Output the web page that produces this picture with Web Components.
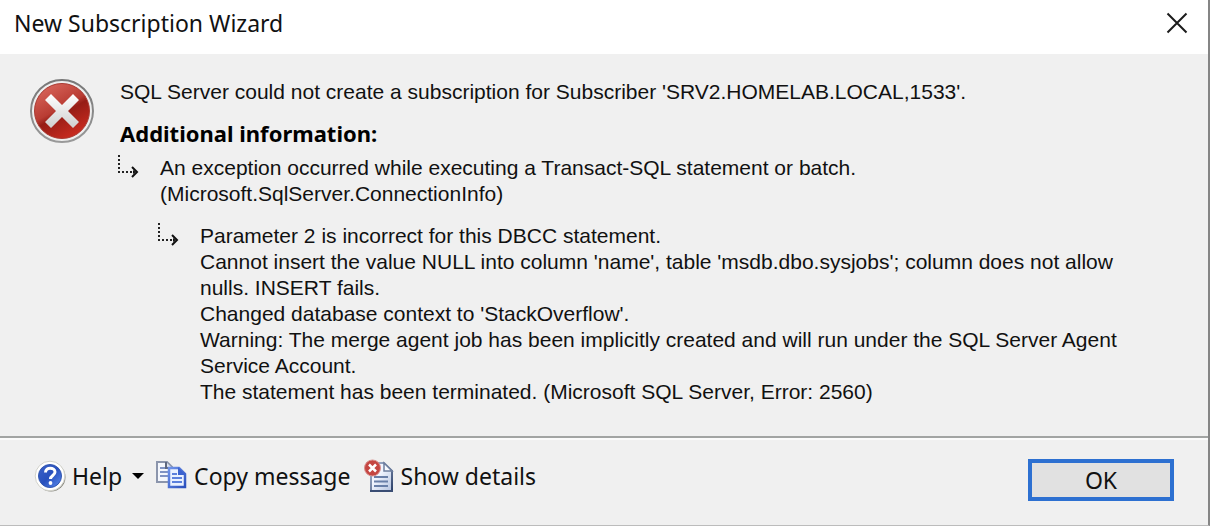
<!DOCTYPE html>
<html lang="en">
<head>
<meta charset="utf-8">
<title>New Subscription Wizard</title>
<style>
  html, body { margin: 0; background: #f0f0f0; }
</style>
</head>
<body>
<wizard-dialog>
  <span slot="title">New Subscription Wizard</span>
  <error-message>
    SQL Server could not create a subscription for Subscriber 'SRV2.HOMELAB.LOCAL,1533'.
    <span slot="heading">Additional information:</span>
    <nested-detail slot="details">
      An exception occurred while executing a Transact-SQL statement or batch.<br>(Microsoft.SqlServer.ConnectionInfo)
      <nested-detail slot="inner">
        Parameter 2 is incorrect for this DBCC statement.<br>Cannot insert the value NULL into column 'name', table 'msdb.dbo.sysjobs'; column does not allow<br>nulls. INSERT fails.<br>Changed database context to 'StackOverflow'.<br>Warning: The merge agent job has been implicitly created and will run under the SQL Server Agent<br>Service Account.<br>The statement has been terminated. (Microsoft SQL Server, Error: 2560)
      </nested-detail>
    </nested-detail>
  </error-message>
  <tool-button slot="tools" icon="help" menu>Help</tool-button>
  <tool-button slot="tools" icon="copy">Copy message</tool-button>
  <tool-button slot="tools" icon="details">Show details</tool-button>
  <default-button slot="actions">OK</default-button>
</wizard-dialog>

<script>
const define = (name, html, setup) => {
  const template = document.createElement('template');
  template.innerHTML = html;
  customElements.define(name, class extends HTMLElement {
    constructor() {
      super();
      this.attachShadow({ mode: 'open' }).append(template.content.cloneNode(true));
    }
    connectedCallback() { if (setup) setup(this, this.shadowRoot); }
  });
};

define('wizard-dialog', `
  <style>
    :host { display: flex; flex-direction: column; box-sizing: border-box; min-height: 100vh;
      border-right: 2px solid #858585; border-bottom: 1px solid #bcbcbc;
      background: #f0f0f0; color: #111; font-family: "Noto Sans", sans-serif; }
    header { display: flex; align-items: center; justify-content: space-between;
      height: 54px; box-sizing: border-box; padding: 0 20px 8px 14px; background: #fff; }
    h1 { margin: 0; font-size: 23px; line-height: 32px; font-weight: 400; }
    header button { display: grid; padding: 0; border: 0; background: none; }
    main { flex: 1; padding: 25px 30px 24px; }
    footer { display: flex; align-items: flex-start; justify-content: space-between;
      height: 89px; box-sizing: border-box; padding: 21px 34px 0;
      border-top: 2px solid #a2a4a3; box-shadow: inset 0 2px #fbfbfb; }
    nav { display: flex; gap: 12px; }
  </style>
  <header>
    <h1><slot name="title"></slot></h1>
    <button type="button" aria-label="Close">
      <svg width="22" height="22" viewBox="0 0 22 22"><path d="M1.5 1.5l19 19M20.5 1.5l-19 19" stroke="#1b1b1b" stroke-width="2" fill="none"/></svg>
    </button>
  </header>
  <main><slot></slot></main>
  <footer>
    <nav aria-label="Message tools"><slot name="tools"></slot></nav>
    <slot name="actions"></slot>
  </footer>`);

define('error-message', `
  <style>
    :host { display: grid; grid-template-columns: 64px 1fr; column-gap: 26px;
      font: 21px/26px "Liberation Sans", Arial, sans-serif; }
    p { margin: 0; }
    h2 { margin: 15px 0 9px; font: 700 22px/26px "Noto Sans", sans-serif; color: #000; }
  </style>
  <svg width="64" height="64" viewBox="0 0 64 64" role="img" aria-label="Error">
    <defs>
      <linearGradient id="red" x1=".2" y1="0" x2=".75" y2="1">
        <stop offset="0" stop-color="#d9665c"/><stop offset=".45" stop-color="#b93c33"/>
        <stop offset=".55" stop-color="#961d16"/><stop offset="1" stop-color="#cf2c20"/>
      </linearGradient>
      <linearGradient id="ring" x1="0" y1="0" x2="0" y2="1">
        <stop offset="0" stop-color="#777"/><stop offset="1" stop-color="#999"/>
      </linearGradient>
      <linearGradient id="cross" x1="0" y1="0" x2="0" y2="1">
        <stop offset="0" stop-color="#fff"/><stop offset="1" stop-color="#cfcfcf"/>
      </linearGradient>
    </defs>
    <circle cx="32" cy="32" r="31" fill="#eee" stroke="url(#ring)" stroke-width="2"/>
    <circle cx="32" cy="32" r="27.5" fill="url(#red)" stroke="#a93a32" stroke-width="1"/>
    <path d="M21 15l11 11 11-11 6 6-11 11 11 11-6 6-11-11-11 11-6-6 11-11-11-11z" fill="url(#cross)"/>
  </svg>
  <div>
    <p><slot></slot></p>
    <h2><slot name="heading"></slot></h2>
    <slot name="details"></slot>
  </div>`);

define('nested-detail', `
  <style>
    :host { display: grid; grid-template-columns: 20px 1fr; column-gap: 20px; }
    ::slotted(nested-detail) { margin-top: 16px; }
    p { margin: 0; }
  </style>
  <svg width="20" height="24" viewBox="2 0 20 24" overflow="visible" aria-hidden="true">
    <path d="M1 0v18" stroke="#222" stroke-width="2" stroke-dasharray="2 2"/>
    <path d="M0 17h16" stroke="#222" stroke-width="2" stroke-dasharray="2 2"/>
    <path d="M14 12l5 5-5 5" fill="none" stroke="#111" stroke-width="2"/><path d="M15 15l3 2-3 2z" fill="#111"/>
  </svg>
  <div><p><slot></slot></p><slot name="inner"></slot></div>`);

const icons = {
  help: `<svg width="32" height="34" viewBox="0 0 32 34">
    <defs><linearGradient id="b" x1="0" y1="0" x2="1" y2="1"><stop offset="0" stop-color="#3c62c8"/><stop offset=".5" stop-color="#2850bd"/><stop offset="1" stop-color="#5b8cf0"/></linearGradient></defs>
    <circle cx="17" cy="18" r="14.5" fill="#85857c"/><circle cx="16" cy="17" r="14.8" fill="#fff" stroke="#d2d2ca"/>
    <circle cx="16" cy="17" r="11.5" fill="url(#b)" stroke="#3458b0"/>
    <path d="M11.5 13.5c0-6 9.500-5.500 9.500-.5 0 3.500-4.500 3.500-4.500 7" fill="none" stroke="#fff" stroke-width="3"/><circle cx="16.500" cy="24" r="1.900" fill="#fff"/></svg>`,
  copy: `<svg width="32" height="34" viewBox="1 1 32 34">
    <defs><linearGradient id="c" x1="0" y1="0" x2="1" y2="1"><stop offset="0" stop-color="#6f93ea"/><stop offset="1" stop-color="#2b50bd"/></linearGradient></defs>
    <path d="M2 4h10l5 5v15H2z" fill="#f4f7fd" stroke="#8b95ac" stroke-width="2"/><path d="M11 4v6h6" fill="#dce2ef" stroke="#5e6880" stroke-width="2"/>
    <path d="M5 10h5M5 14h8M5 18h8" stroke="#7f93c4" stroke-width="2"/>
    <path d="M14 10h10l6 6v13H14z" fill="#eaf1ff" stroke="url(#c)" stroke-width="2.500"/><path d="M23 9v8h8z" fill="#3b62cf"/>
    <path d="M17 16h5M17 20h10M17 24h10" stroke="#5b80dc" stroke-width="2"/></svg>`,
  details: `<svg width="32" height="34" viewBox="-3 0 32 34">
    <defs><linearGradient id="d" x1="0" y1="0" x2="1" y2="1"><stop offset="0" stop-color="#b0bed8"/><stop offset="1" stop-color="#2d4169"/></linearGradient>
    <linearGradient id="e" x1="0" y1="0" x2="1" y2="1"><stop offset=".4" stop-color="#f1f5ff"/><stop offset="1" stop-color="#b4c2de"/></linearGradient></defs>
    <path d="M5 4h13l8 8v20H5z" fill="url(#e)" stroke="url(#d)" stroke-width="2"/><path d="M4 32h23" stroke="#3a4d74" stroke-width="2"/>
    <path d="M18 4v8h8z" fill="#f8faff" stroke="#6e7f9f" stroke-width="1.500"/><path d="M8 18h14M8 22.500h14M8 27h14" stroke="#697fa8" stroke-width="2"/>
    <circle cx="6.500" cy="9" r="8" fill="#c54642" stroke="#d9908d"/><path d="M3 5.500l7 7M10 5.500l-7 7" stroke="#fff" stroke-width="2.500"/></svg>`
};

define('tool-button', `
  <style>
    :host { display: block; }
    button { display: flex; align-items: center; gap: 6px; padding: 0; border: 0; background: none;
      color: #111; font: 23px/34px "Noto Sans", sans-serif; white-space: nowrap; }
    #icon { display: grid; }
    #arrow { display: none; margin-left: 4px; }
    :host([menu]) #arrow { display: block; }
  </style>
  <button type="button"><span id="icon"></span><slot></slot>
    <svg id="arrow" width="12" height="6" viewBox="0 0 12 6" aria-hidden="true"><path d="M0 0h12L6 6z"/></svg>
  </button>`, (host, root) => {
    root.getElementById('icon').innerHTML = icons[host.getAttribute('icon')];
  });

define('default-button', `
  <style>
    :host { display: block; }
    button { width: 146px; height: 42px; padding: 0; border: 4px solid #2d70d1; background: #e1e1e1;
      color: #111; font: 23px/32px "Noto Sans", sans-serif; }
  </style>
  <button type="button"><slot></slot></button>`);
</script>
</body>
</html>
